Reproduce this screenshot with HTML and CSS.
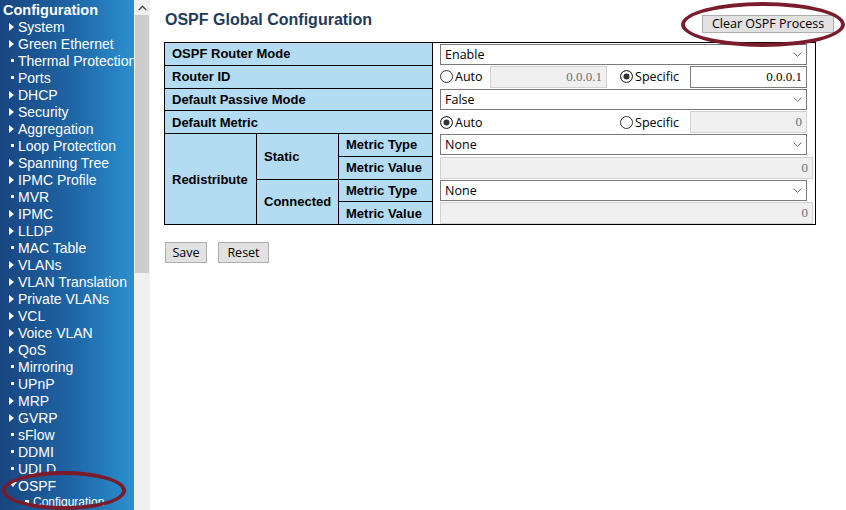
FILE: index.html
```html
<!DOCTYPE html>
<html lang="en">
<head>
<meta charset="utf-8">
<title>OSPF Global Configuration</title>
<link rel="stylesheet" href="styles.css">
</head>
<body>
<nav class="sidebar">
  <div class="menu-title">Configuration</div>
  <ul class="menu">
    <li class="item"><span class="ico"><span class="tri"></span></span>System</li>
    <li class="item"><span class="ico"><span class="tri"></span></span>Green Ethernet</li>
    <li class="item"><span class="ico"><span class="sq"></span></span>Thermal Protection</li>
    <li class="item"><span class="ico"><span class="sq"></span></span>Ports</li>
    <li class="item"><span class="ico"><span class="tri"></span></span>DHCP</li>
    <li class="item"><span class="ico"><span class="tri"></span></span>Security</li>
    <li class="item"><span class="ico"><span class="tri"></span></span>Aggregation</li>
    <li class="item"><span class="ico"><span class="sq"></span></span>Loop Protection</li>
    <li class="item"><span class="ico"><span class="tri"></span></span>Spanning Tree</li>
    <li class="item"><span class="ico"><span class="tri"></span></span>IPMC Profile</li>
    <li class="item"><span class="ico"><span class="sq"></span></span>MVR</li>
    <li class="item"><span class="ico"><span class="tri"></span></span>IPMC</li>
    <li class="item"><span class="ico"><span class="tri"></span></span>LLDP</li>
    <li class="item"><span class="ico"><span class="sq"></span></span>MAC Table</li>
    <li class="item"><span class="ico"><span class="tri"></span></span>VLANs</li>
    <li class="item"><span class="ico"><span class="tri"></span></span>VLAN Translation</li>
    <li class="item"><span class="ico"><span class="tri"></span></span>Private VLANs</li>
    <li class="item"><span class="ico"><span class="tri"></span></span>VCL</li>
    <li class="item"><span class="ico"><span class="tri"></span></span>Voice VLAN</li>
    <li class="item"><span class="ico"><span class="tri"></span></span>QoS</li>
    <li class="item"><span class="ico"><span class="sq"></span></span>Mirroring</li>
    <li class="item"><span class="ico"><span class="sq"></span></span>UPnP</li>
    <li class="item"><span class="ico"><span class="tri"></span></span>MRP</li>
    <li class="item"><span class="ico"><span class="tri"></span></span>GVRP</li>
    <li class="item"><span class="ico"><span class="sq"></span></span>sFlow</li>
    <li class="item"><span class="ico"><span class="sq"></span></span>DDMI</li>
    <li class="item"><span class="ico"><span class="sq"></span></span>UDLD</li>
    <li class="item"><span class="ico"><span class="tri-down"></span></span>OSPF</li>
    <li class="item sub"><span class="ico"><span class="sq"></span></span>Configuration</li>
  </ul>
</nav>
<div class="scrollbar">
  <div class="sb-up"><svg width="9" height="6" viewBox="0 0 9 6"><polyline points="0.8,5 4.5,1.3 8.2,5" fill="none" stroke="#505050" stroke-width="1.4"/></svg></div>
  <div class="sb-thumb"></div>
</div>
<main class="main">
  <div class="header">
    <h1 class="title">OSPF Global Configuration</h1>
    <button class="btn btn-clear" type="button">Clear OSPF Process</button>
  </div>
  <table class="cfg">
    <colgroup><col class="c1"><col class="c2"><col class="c3"><col class="c4"></colgroup>
    <tr>
      <th colspan="3">OSPF Router Mode</th>
      <td class="val"><div class="sel"><select><option>Enable</option><option>Disable</option></select><svg class="chev" width="9" height="5" viewBox="0 0 9 5"><polyline points="0.5,0.5 4.5,4.3 8.5,0.5" fill="none" stroke="#6a6a6a" stroke-width="1"/></svg></div></td>
    </tr>
    <tr>
      <th colspan="3">Router ID</th>
      <td class="val"><div class="opts">
        <label class="opt opt-a"><input class="radio" type="radio" name="rid">Auto</label>
        <input class="txt w117" type="text" value="0.0.0.1" disabled>
        <label class="opt opt-s gap13"><input class="radio" type="radio" name="rid" checked>Specific</label>
        <input class="txt w117" type="text" value="0.0.0.1">
      </div></td>
    </tr>
    <tr>
      <th colspan="3">Default Passive Mode</th>
      <td class="val"><div class="sel"><select><option>False</option><option>True</option></select><svg class="chev" width="9" height="5" viewBox="0 0 9 5"><polyline points="0.5,0.5 4.5,4.3 8.5,0.5" fill="none" stroke="#6a6a6a" stroke-width="1"/></svg></div></td>
    </tr>
    <tr>
      <th colspan="3">Default Metric</th>
      <td class="val"><div class="opts">
        <label class="opt opt-wide"><input class="radio" type="radio" name="dm" checked>Auto</label>
        <label class="opt opt-s"><input class="radio" type="radio" name="dm">Specific</label>
        <input class="txt w117" type="text" value="0" disabled>
      </div></td>
    </tr>
    <tr>
      <th rowspan="4">Redistribute</th>
      <th rowspan="2">Static</th>
      <th>Metric Type</th>
      <td class="val"><div class="sel"><select><option>None</option></select><svg class="chev" width="9" height="5" viewBox="0 0 9 5"><polyline points="0.5,0.5 4.5,4.3 8.5,0.5" fill="none" stroke="#6a6a6a" stroke-width="1"/></svg></div></td>
    </tr>
    <tr>
      <th>Metric Value</th>
      <td class="val"><input class="txt wfull" type="text" value="0" disabled></td>
    </tr>
    <tr>
      <th rowspan="2">Connected</th>
      <th>Metric Type</th>
      <td class="val"><div class="sel"><select><option>None</option></select><svg class="chev" width="9" height="5" viewBox="0 0 9 5"><polyline points="0.5,0.5 4.5,4.3 8.5,0.5" fill="none" stroke="#6a6a6a" stroke-width="1"/></svg></div></td>
    </tr>
    <tr>
      <th>Metric Value</th>
      <td class="val"><input class="txt wfull" type="text" value="0" disabled></td>
    </tr>
  </table>
  <div class="actions">
    <button class="btn btn-save" type="button">Save</button>
    <button class="btn btn-reset" type="button">Reset</button>
  </div>
</main>
<div class="mark mark-clear"></div>
<div class="mark mark-ospf"></div>
</body>
</html>
```
FILE: styles.css
```css
* { box-sizing: border-box; }
html, body { margin: 0; }
body {
  width: 846px;
  height: 510px;
  overflow: hidden;
  position: relative;
  display: flex;
  background: #fff;
  font-family: "Liberation Sans", Arial, sans-serif;
}

/* sidebar */
.sidebar {
  width: 134px;
  flex: none;
  height: 510px;
  overflow: hidden;
  white-space: nowrap;
  color: #fff;
  padding-top: 2px;
  background: linear-gradient(to right, #184580 0%, #1f66a6 55%, #2a90d0 100%);
}
.menu-title {
  font-weight: bold;
  font-size: 14.5px;
  line-height: 16px;
  padding-left: 3px;
}
.menu { list-style: none; margin: 0; padding: 0; }
.item {
  display: flex;
  align-items: center;
  height: 17px;
  padding-left: 9px;
  font-size: 14px;
}
.ico { width: 9px; flex: none; display: flex; align-items: center; }
.tri {
  width: 0; height: 0;
  border-left: 5px solid #fff;
  border-top: 4.5px solid transparent;
  border-bottom: 4.5px solid transparent;
}
.tri-down {
  width: 0; height: 0;
  margin-top: -3px;
  border-top: 5px solid #fff;
  border-left: 4px solid transparent;
  border-right: 4px solid transparent;
}
.sq { width: 3.5px; height: 3.5px; background: #fff; margin-left: 1.5px; }
.sub { padding-left: 25px; font-size: 12px; height: 15px; }
.sub .ico { width: 8px; }
.sub .sq { margin-left: 0; }

.scrollbar {
  width: 16px;
  flex: none;
  height: 510px;
  background: #f0f0f0;
  display: flex;
  flex-direction: column;
  align-items: center;
}
.sb-up { height: 15px; width: 16px; display: flex; align-items: center; justify-content: center; }
.sb-thumb { width: 14px; height: 258px; background: #cdcdcd; }

/* main */
.main { flex: 1; padding: 10px 12px 0 14px; }
.header {
  display: flex;
  justify-content: space-between;
  align-items: flex-start;
  height: 32px;
}
.title {
  margin: 0 0 0 1px;
  font-size: 16px;
  line-height: 20px;
  font-weight: bold;
  color: #1f3b59;
}
.btn {
  font-family: "Open Sans", "Liberation Sans", sans-serif;
  font-size: 12.5px;
  color: #000;
  background: #e1e1e1;
  border: 1px solid #adadad;
  border-radius: 0;
  margin: 0;
  padding: 0 8px;
  height: 21px;
  line-height: 19px;
}
.btn-clear { height: 18px; line-height: 16px; margin-top: 4.7px; width: 132px; padding: 0; }

.cfg {
  border-collapse: collapse;
  table-layout: fixed;
  width: 651px;
  border: 1px solid #000;
}
.c1 { width: 92px; }
.c2 { width: 82px; }
.c3 { width: 94px; }
.c4 { width: 383px; }
.cfg tr { height: 22.75px; }
.cfg th {
  background: #b3dcf2;
  border: 1px solid #000;
  text-align: left;
  font-weight: bold;
  font-size: 13px;
  color: #000;
  padding: 0 0 0 7px;
  white-space: nowrap;
}
.val { border: none; padding: 0 0 0 7px; vertical-align: middle; }

.sel { position: relative; width: 367px; height: 21px; }
.sel select {
  appearance: none;
  -webkit-appearance: none;
  display: block;
  width: 100%;
  height: 100%;
  margin: 0;
  border: 1px solid #7a7a7a;
  border-radius: 0;
  background: #fff;
  color: #000;
  font-family: "Open Sans", "Liberation Sans", sans-serif;
  font-size: 12.5px;
  padding: 0 0 0 4px;
}
.chev { position: absolute; right: 5px; top: 8px; pointer-events: none; }

.opts { display: flex; align-items: center; }
.opt {
  display: flex;
  align-items: center;
  gap: 2px;
  flex: none;
  font-family: "Open Sans", "Liberation Sans", sans-serif;
  font-size: 12.5px;
  color: #000;
}
.opt-a { width: 50px; }
.opt-s { width: 70px; }
.opt-wide { width: 180px; }
.gap13 { margin-left: 13px; }

.radio {
  appearance: none;
  -webkit-appearance: none;
  width: 13px;
  height: 13px;
  margin: 0;
  flex: none;
  border: 1px solid #333;
  border-radius: 50%;
  background: #fff;
}
.radio:checked { background: #333; box-shadow: inset 0 0 0 2.5px #fff; }

.txt {
  display: block;
  height: 22px;
  margin: 0;
  border: 1px solid #7a7a7a;
  border-radius: 0;
  background: #fff;
  color: #000;
  font-family: "Liberation Serif", "Times New Roman", serif;
  font-size: 13px;
  text-align: right;
  padding: 0 4px;
}
.txt:disabled { background: #f0f0f0; border-color: #d2d2d2; color: #6d6d6d; }
.w117 { width: 117px; }
.wfull { width: 373px; }

.actions { display: flex; gap: 11px; margin: 17px 0 0 1px; }
.btn-save { width: 42px; padding: 0; }
.btn-reset { width: 51px; padding: 0; }

/* annotation marks */
.mark {
  position: absolute;
  border: 4px solid #7a1c2c;
  border-radius: 50%;
  pointer-events: none;
}
.mark-clear { left: 681px; top: 2px; width: 164px; height: 45px; }
.mark-ospf { left: 2px; top: 471px; width: 124px; height: 39px; }
```
